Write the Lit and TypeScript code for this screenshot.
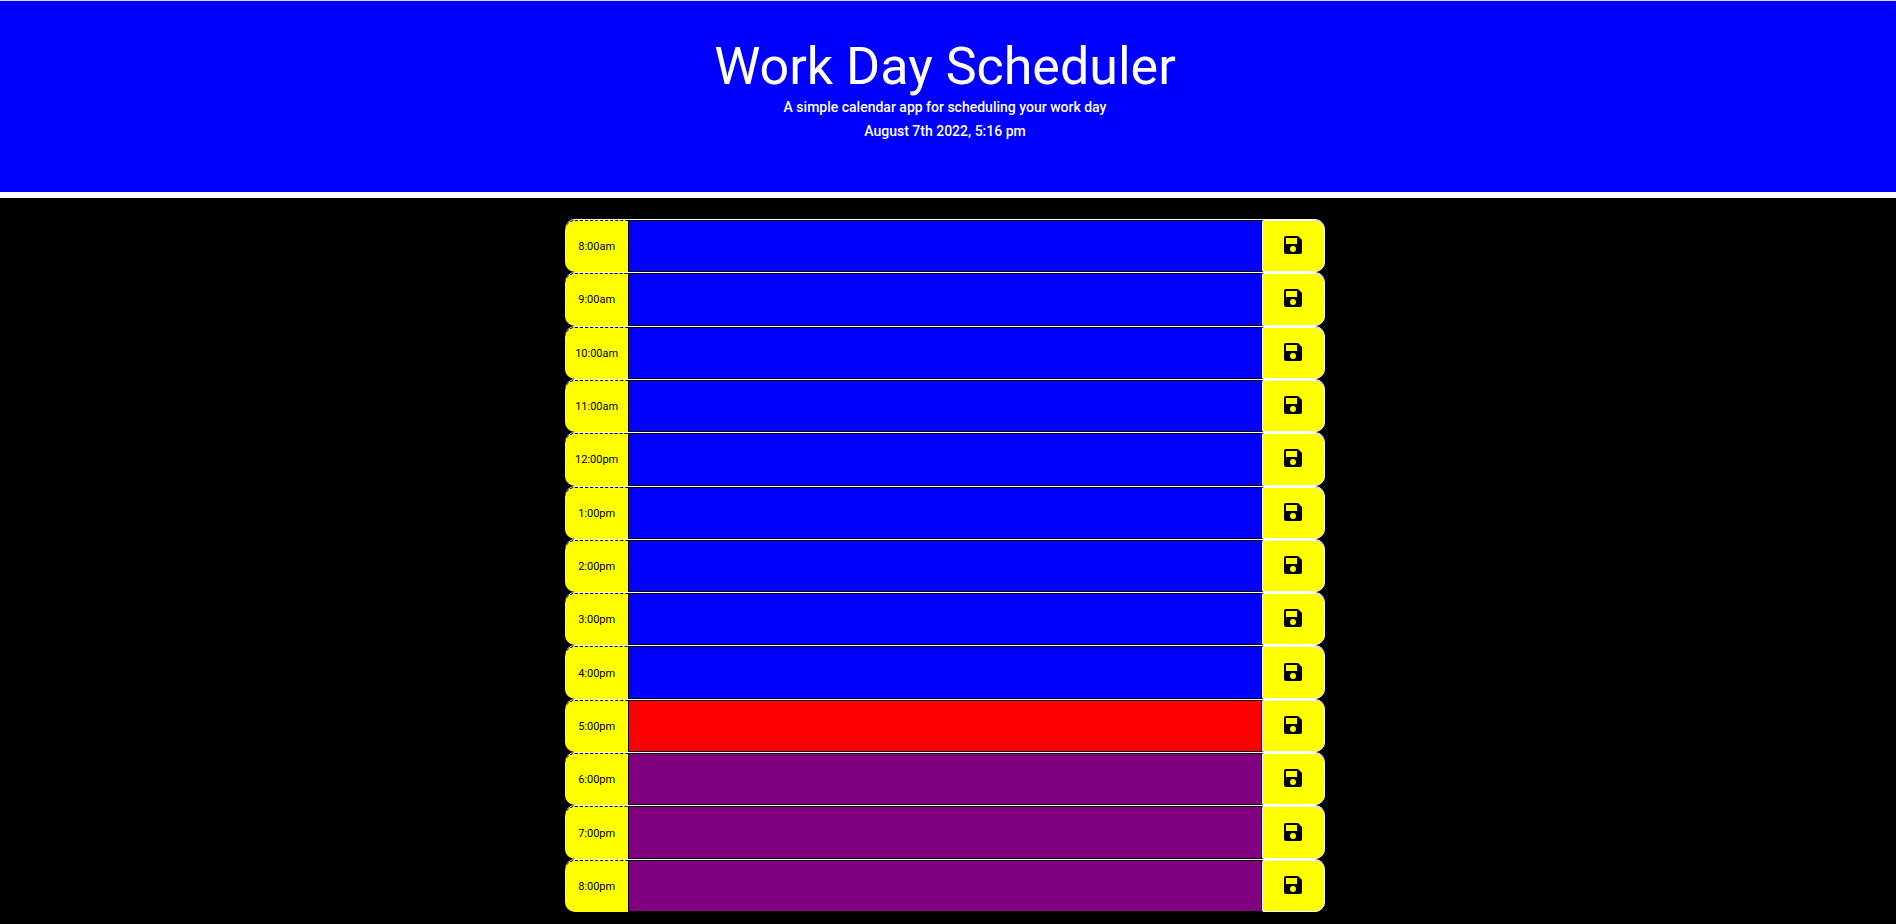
import { LitElement, html, css } from "lit";
import { customElement, state } from "lit/decorators.js";

type Phase = "past" | "present" | "future";

const label = (hour: number) =>
  `${hour > 12 ? hour - 12 : hour}:00${hour < 12 ? "am" : "pm"}`;

@customElement("app-root")
export class AppRoot extends LitElement {
  static styles = css`
    :host {
      display: flex;
      flex-direction: column;
      min-height: 100vh;
      box-sizing: border-box;
      background: #000;
      font-family: "Roboto", "Open Sans", sans-serif;
    }
    .hero {
      box-sizing: border-box;
      padding: 38px 24px 49px 18px;
      border-top: 1px solid #d5dbe6;
      border-bottom: 6px solid #fff;
      background: #00f;
      color: #fff;
      text-align: center;
    }
    h1 {
      margin: 0;
      font-size: 52px;
      line-height: 56px;
      font-weight: 400;
    }
    .hero p {
      margin: 0;
      font-size: 14px;
      line-height: 24px;
      font-weight: 500;
    }
    main {
      flex: 1;
      display: grid;
      grid-auto-rows: minmax(48px, 1fr);
      box-sizing: border-box;
      width: 100%;
      max-width: 766px;
      margin: 0 auto;
      padding: 21px 6px 12px 0;
    }
    .row {
      display: grid;
      grid-template-columns: 1fr 10fr 1fr;
      border-top: 1px solid #fff;
      border-radius: 10px;
    }
    .hour {
      display: flex;
      align-items: center;
      justify-content: center;
      border-top: 1px dashed #000;
      border-radius: 10px 0 0 10px;
      background: #ff0;
      color: #000;
      font-size: 11px;
    }
    textarea {
      box-sizing: border-box;
      width: 100%;
      min-width: 0;
      height: 100%;
      margin: 0;
      padding: 4px;
      border: 1px solid #000;
      border-radius: 0;
      outline: none;
      resize: none;
      background: inherit;
      color: #fff;
      font: inherit;
    }
    .past {
      background: #00f;
    }
    .present {
      background: #f00;
    }
    .future {
      background: #800080;
    }
    button {
      display: grid;
      place-items: center;
      min-width: 0;
      padding: 0 0 2px;
      border: 1px solid #fff;
      border-radius: 2px 10px 10px 2px;
      background: #ff0;
      color: #000;
      cursor: pointer;
    }
    svg {
      display: block;
      width: 18px;
      height: 18px;
    }
  `;

  @state() private hours = Array.from({ length: 13 }, (_, i) => i + 8);
  @state() private current = 17;

  private phase(hour: number): Phase {
    if (hour === this.current) return "present";
    return hour < this.current ? "past" : "future";
  }

  render() {
    return html`
      <header class="hero">
        <h1>Work Day Scheduler</h1>
        <p>A simple calendar app for scheduling your work day</p>
        <p>August 7th 2022, 5:16 pm</p>
      </header>
      <main>
        ${this.hours.map(
          (h) => html`<div class="row ${this.phase(h)}">
            <label class="hour" for="slot-${h}">${label(h)}</label>
            <textarea id="slot-${h}"></textarea>
            <button type="button" aria-label="Save ${label(h)}">
              <svg viewBox="0 0 18 18" aria-hidden="true">
                <path fill="currentColor" fill-rule="evenodd" d="M2 0H14L18 4V16a2 2 0 0 1-2 2H2a2 2 0 0 1-2-2V2a2 2 0 0 1 2-2ZM2 2V8H13V2ZM9 10a3 3 0 1 0 0 6a3 3 0 0 0 0-6Z" />
              </svg>
            </button>
          </div>`
        )}
      </main>
    `;
  }
}
